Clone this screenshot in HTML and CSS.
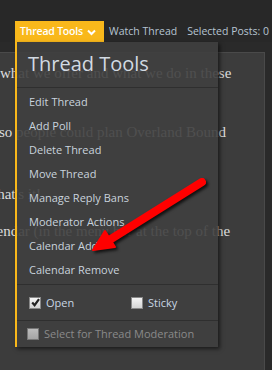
FILE: index.html
```html
<html>
<head>
<title>Thread Tools</title>
<link rel="stylesheet" href="styles.css">
</head>
<body>
<div id="topbar">
  <div class="nav">
    <div class="tab">Thread Tools
      <svg class="chev" width="9" height="7" viewBox="0 0 9 7"><polyline points="1,1.5 4.5,5 8,1.5" fill="none" stroke="#fff" stroke-width="2"/></svg>
    </div>
    <span class="navlink">Watch Thread</span>
    <span class="navlink sel">Selected Posts: 0</span>
  </div>
</div>

<div id="post">
  <p class="l1">what we offer and what we do in these</p>
  <p class="l2">so people could plan Overland Bound</p>
  <p class="l3">that's it!</p>
  <p class="l4">calendar (in the menu bar at the top of the</p>
</div>

<div id="menu">
  <div class="menuhead">Thread Tools</div>
  <ul class="items">
    <li>Edit Thread</li>
    <li>Add Poll</li>
    <li>Delete Thread</li>
    <li>Move Thread</li>
    <li>Manage Reply Bans</li>
    <li>Moderator Actions</li>
    <li>Calendar Add</li>
    <li>Calendar Remove</li>
  </ul>
  <div class="checks">
    <label class="chk open"><span class="box checked"><svg width="9" height="9" viewBox="0 0 9 9"><polyline points="1.2,4.6 3.6,7.2 8,1.2" fill="none" stroke="#222" stroke-width="2.2"/></svg></span>Open</label>
    <label class="chk sticky"><span class="box"></span>Sticky</label>
  </div>
  <div class="selectmod"><span class="box dim"></span>Select for Thread Moderation</div>
</div>

<svg id="arrow" width="272" height="370" viewBox="0 0 272 370">
  <line x1="202" y1="182" x2="111" y2="239" stroke="#f00" stroke-width="8" stroke-linecap="round"/>
  <polygon points="93,250 105,231 115,247" fill="#f00" stroke="#f00" stroke-width="2" stroke-linejoin="round"/>
</svg>
</body>
</html>
```

FILE: styles.css
```css
body{
    margin:0;
    background:#2a2a2a;
    width:272px;
    height:370px;
    overflow:hidden;
    position:relative;
    font-family:"Open Sans", sans-serif;
}
#topbar{
    height:42px;
    background:#282828;
}
.nav{
    display:flex;
    align-items:flex-end;
    padding:21px 0 0 15px;
    white-space:nowrap;
}
.tab{
    box-sizing:border-box;
    width:89px;
    height:21px;
    line-height:21px;
    background:#f9b81b;
    color:#fff;
    font-size:10.5px;
    font-weight:600;
    letter-spacing:-0.2px;
    padding:0 0 0 5px;
    display:flex;
    align-items:center;
    gap:4px;
}
.chev{
    margin-top:1px;
}
.navlink{
    color:#b6c4d2;
    font-size:10.5px;
    line-height:21px;
    margin-left:5px;
}
.navlink.sel{
    margin-left:10px;
}

#post{
    margin:10px 7px 0 0;
    height:330px;
    background:#3c3c3c;
    border:1px solid #4a4a4a;
    border-left:none;
    border-bottom:none;
    font-family:"Liberation Serif", serif;
    font-size:15px;
    line-height:20px;
    color:#dcdcdc;
    white-space:nowrap;
    overflow:hidden;
}
#post p{
    margin:0;
}
.l1{ margin-top:10px !important; text-indent:0; }
.l2{ margin-top:39px !important; text-indent:-1px; }
.l3{ margin-top:42px !important; text-indent:-7px; }
.l4{ margin-top:17px !important; text-indent:-21px; }

#menu{
    position:absolute;
    left:15px;
    top:42px;
    width:201px;
    height:305px;
    border-left:2px solid #f9b81b;
    background:rgba(63,63,63,0.9);
    box-shadow:2px 2px 4px rgba(0,0,0,0.55);
}
.menuhead{
    height:35px;
    padding:10px 0 0 11px;
    font-size:20px;
    line-height:24px;
    color:#d2dae2;
    border-bottom:1px solid #2f2f2f;
}
.items{
    list-style:none;
    margin:0;
    padding:2px 0 2px 12px;
    border-bottom:1px solid #2f2f2f;
}
.items li{
    height:24px;
    line-height:24px;
    font-size:11px;
    color:#c9d3dd;
}
.checks{
    height:35px;
    display:flex;
    align-items:center;
    border-bottom:1px solid #2f2f2f;
    font-size:11px;
    color:#c8d6e4;
}
.chk{
    display:flex;
    align-items:center;
}
.chk.open{
    margin-left:12px;
    width:102px;
}
.box{
    width:10px;
    height:10px;
    border:1px solid #888;
    background:linear-gradient(#f4f4f4,#d4d4d4);
    margin-right:5px;
    display:flex;
    align-items:center;
    justify-content:center;
}
.box.dim{
    background:linear-gradient(#bcbcbc,#a4a4a4);
    border-color:#777;
}
.selectmod{
    display:flex;
    align-items:center;
    padding:5px 0 0 10px;
    font-size:11px;
    color:#8a8a8a;
}
#arrow{
    position:absolute;
    left:0;
    top:0;
    pointer-events:none;
    filter:drop-shadow(2px 2px 1.5px rgba(0,0,0,0.75));
}
```
